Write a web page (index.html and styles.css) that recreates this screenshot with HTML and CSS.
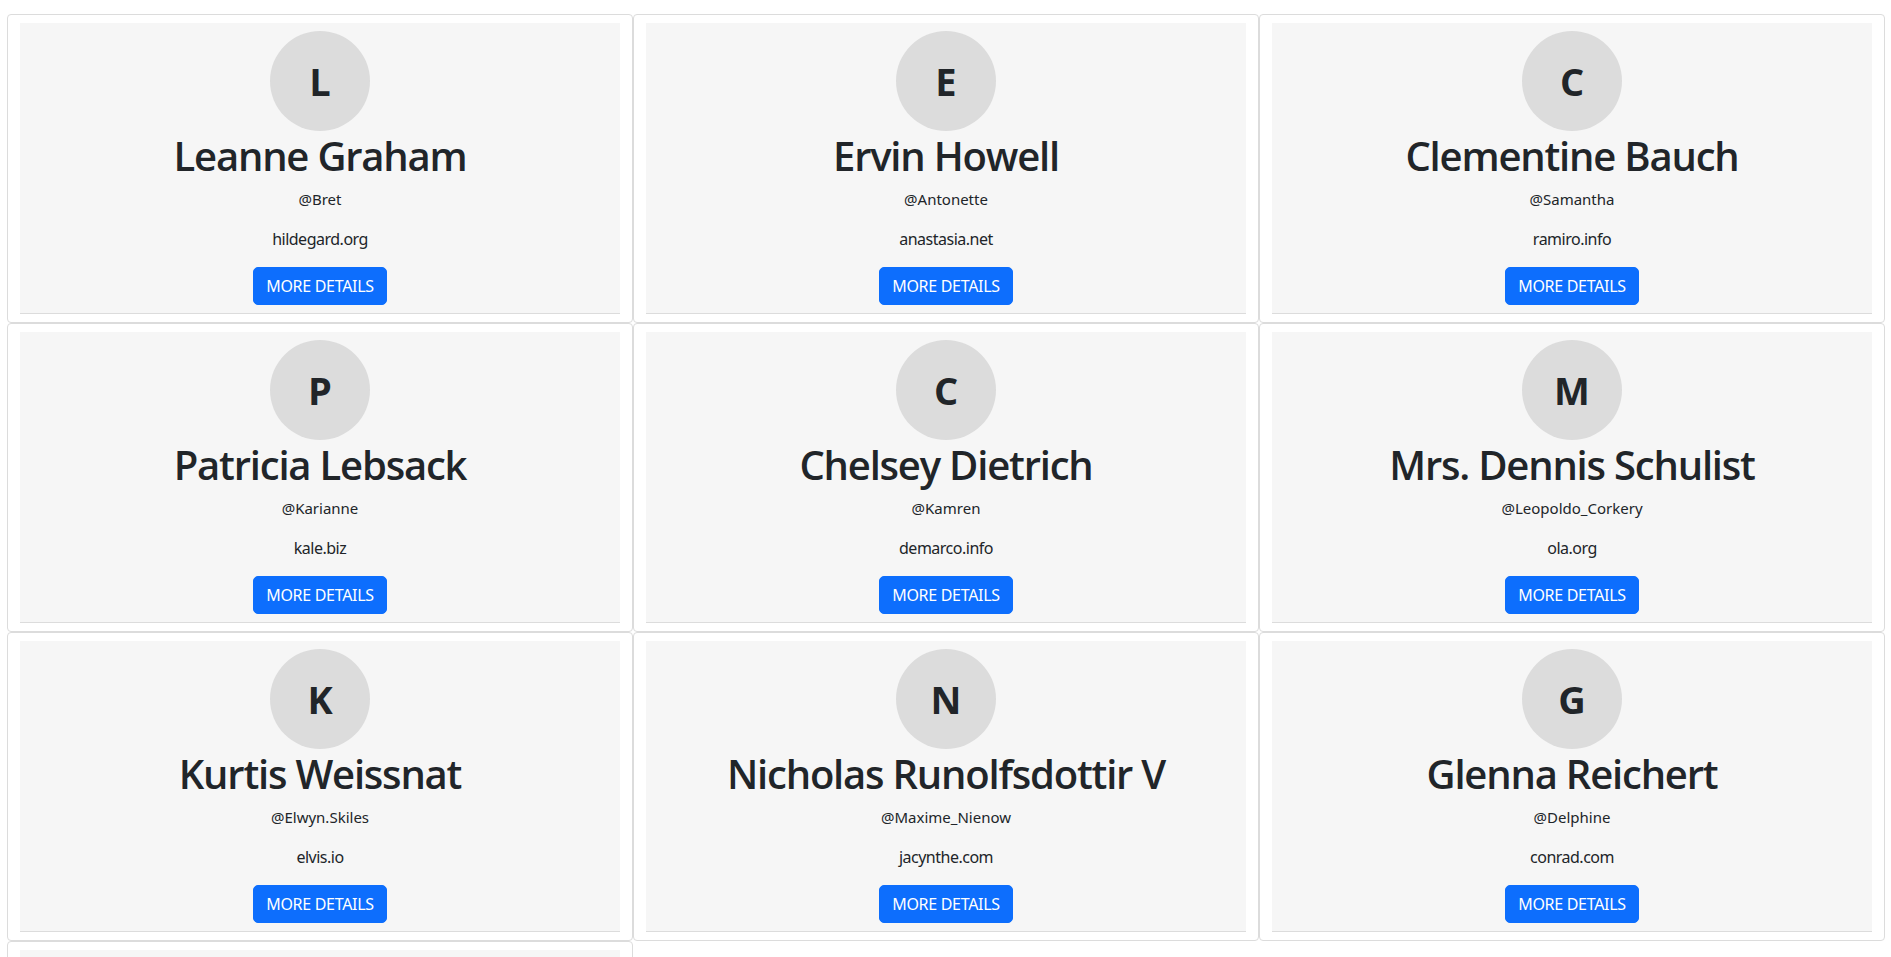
FILE: index.html
```html
<!DOCTYPE html>
<html lang="en">
<head>
<meta charset="utf-8">
<title>Users</title>
<link rel="stylesheet" href="styles.css">
</head>
<body>
<div class="grid">
  <div class="card"><div class="card-body">
    <div class="avatar">L</div>
    <h1 class="name">Leanne Graham</h1>
    <p class="handle"><small>@Bret</small></p>
    <p class="site">hildegard.org</p>
    <button class="btn">MORE DETAILS</button>
  </div></div>
  <div class="card"><div class="card-body">
    <div class="avatar">E</div>
    <h1 class="name">Ervin Howell</h1>
    <p class="handle"><small>@Antonette</small></p>
    <p class="site">anastasia.net</p>
    <button class="btn">MORE DETAILS</button>
  </div></div>
  <div class="card"><div class="card-body">
    <div class="avatar">C</div>
    <h1 class="name">Clementine Bauch</h1>
    <p class="handle"><small>@Samantha</small></p>
    <p class="site">ramiro.info</p>
    <button class="btn">MORE DETAILS</button>
  </div></div>
  <div class="card"><div class="card-body">
    <div class="avatar">P</div>
    <h1 class="name">Patricia Lebsack</h1>
    <p class="handle"><small>@Karianne</small></p>
    <p class="site">kale.biz</p>
    <button class="btn">MORE DETAILS</button>
  </div></div>
  <div class="card"><div class="card-body">
    <div class="avatar">C</div>
    <h1 class="name">Chelsey Dietrich</h1>
    <p class="handle"><small>@Kamren</small></p>
    <p class="site">demarco.info</p>
    <button class="btn">MORE DETAILS</button>
  </div></div>
  <div class="card"><div class="card-body">
    <div class="avatar">M</div>
    <h1 class="name">Mrs. Dennis Schulist</h1>
    <p class="handle"><small>@Leopoldo_Corkery</small></p>
    <p class="site">ola.org</p>
    <button class="btn">MORE DETAILS</button>
  </div></div>
  <div class="card"><div class="card-body">
    <div class="avatar">K</div>
    <h1 class="name">Kurtis Weissnat</h1>
    <p class="handle"><small>@Elwyn.Skiles</small></p>
    <p class="site">elvis.io</p>
    <button class="btn">MORE DETAILS</button>
  </div></div>
  <div class="card"><div class="card-body">
    <div class="avatar">N</div>
    <h1 class="name">Nicholas Runolfsdottir V</h1>
    <p class="handle"><small>@Maxime_Nienow</small></p>
    <p class="site">jacynthe.com</p>
    <button class="btn">MORE DETAILS</button>
  </div></div>
  <div class="card"><div class="card-body">
    <div class="avatar">G</div>
    <h1 class="name">Glenna Reichert</h1>
    <p class="handle"><small>@Delphine</small></p>
    <p class="site">conrad.com</p>
    <button class="btn">MORE DETAILS</button>
  </div></div>
  <div class="card"><div class="card-body">
    <div class="avatar">C</div>
    <h1 class="name">Clementina DuBuque</h1>
    <p class="handle"><small>@Moriah.Stanton</small></p>
    <p class="site">ambrose.net</p>
    <button class="btn">MORE DETAILS</button>
  </div></div>
</div>
</body>
</html>
```
FILE: styles.css
```css
* { box-sizing: border-box; }
html, body { margin: 0; }
body {
  font-family: "Noto Sans", "Open Sans", sans-serif;
  font-size: 16px;
  line-height: 1.5;
  color: #212529;
  background: #fff;
  padding: 14px 6px 0 7px;
}
.grid {
  display: grid;
  grid-template-columns: repeat(3, 1fr);
}
.card {
  border: 1px solid #dcdcdc;
  border-radius: 4px;
  padding: 8px 12px;
}
.card-body {
  background: #f6f6f6;
  border-bottom: 1px solid #dcdcdc;
  padding: 8px;
  text-align: center;
  display: flex;
  flex-direction: column;
  align-items: center;
}
.avatar {
  width: 100px;
  height: 100px;
  border-radius: 50%;
  background: #dcdcdc;
  display: flex;
  align-items: center;
  justify-content: center;
  font-family: "Open Sans", "Noto Sans", sans-serif;
  font-size: 38px;
  font-weight: 700;
  line-height: 1;
}
.name {
  font-family: "Open Sans", "Noto Sans", sans-serif;
  font-size: 40px;
  font-weight: 600;
  letter-spacing: -1.2px;
  line-height: 1.2;
  margin: 1px 0 7px;
}
.handle { margin: 0 0 16px; }
.handle small { font-size: 15px; }
.site {
  margin: 0 0 16px;
  letter-spacing: -0.5px;
}
.btn {
  font-family: inherit;
  font-size: 16px;
  line-height: 1.5;
  letter-spacing: -0.3px;
  padding: 6px 12px;
  border: 1px solid #0d6efd;
  border-radius: 5px;
  background: #0d6efd;
  color: #fff;
  cursor: pointer;
}
```
